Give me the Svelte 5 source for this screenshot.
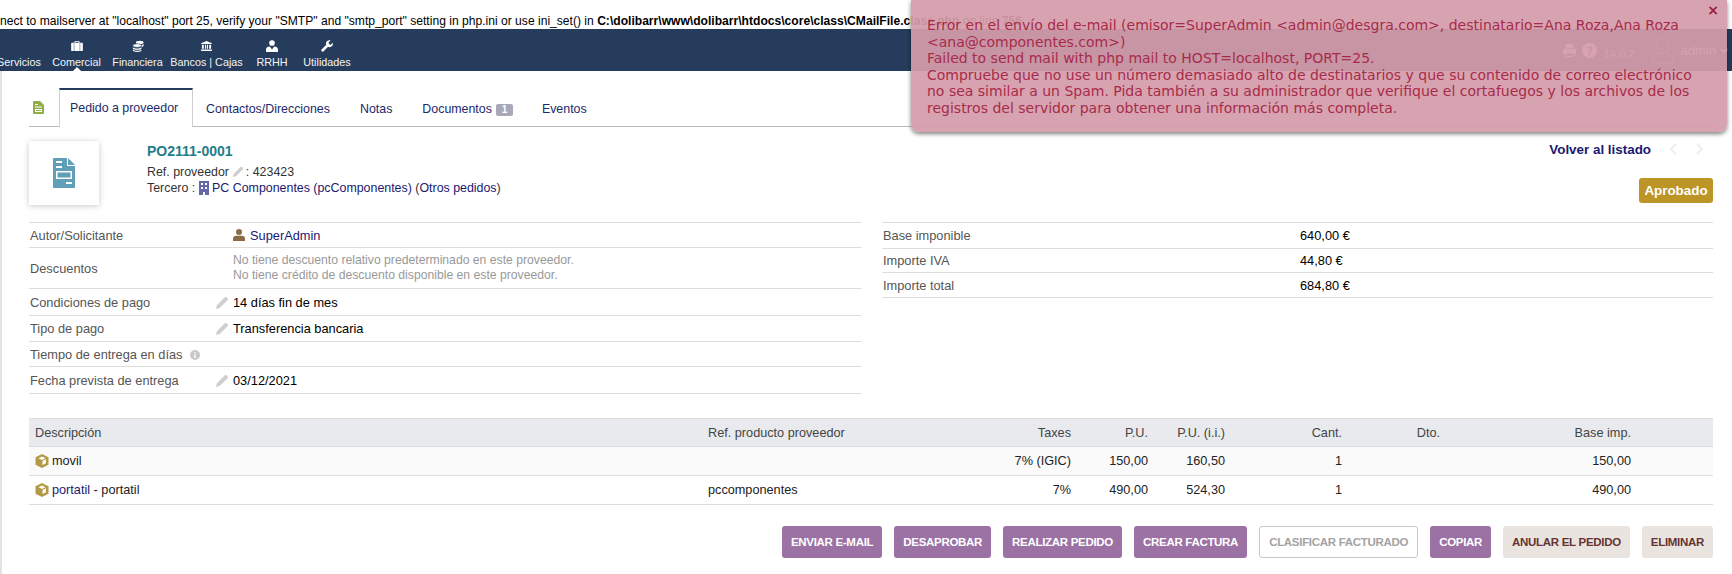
<script>
  const menu = [
    { label: 'Servicios', cls: 'm1', icon: 'none' },
    { label: 'Comercial', cls: 'm2', icon: 'case' },
    { label: 'Financiera', cls: 'm3', icon: 'coins' },
    { label: 'Bancos | Cajas', cls: 'm4', icon: 'bank' },
    { label: 'RRHH', cls: 'm5', icon: 'user' },
    { label: 'Utilidades', cls: 'm6', icon: 'wrench' }
  ];
  const buttons = [
    ['ENVIAR E-MAIL', 'p'], ['DESAPROBAR', 'p'], ['REALIZAR PEDIDO', 'p'], ['CREAR FACTURA', 'p'],
    ['CLASIFICAR FACTURADO', 'o'], ['COPIAR', 'p'], ['ANULAR EL PEDIDO', 'g'], ['ELIMINAR', 'g']
  ];
  const lines = [
    { name: 'movil', link: false, rest: '', ref: '', tax: '7% (IGIC)', pu: '150,00', pui: '160,50', qty: '1', base: '150,00' },
    { name: 'portatil', link: true, rest: ' - portatil', ref: 'pccomponentes', tax: '7%', pu: '490,00', pui: '524,30', qty: '1', base: '490,00' }
  ];
  const pencil = 'M1 15l1-4L10.500 2.500a1.400 1.400 0 0 1 2 0l1 1a1.400 1.400 0 0 1 0 2L5 14z';
</script>

{#snippet pen(cls)}
  <svg class={cls} viewBox="0 0 15 16" aria-hidden="true"><path d={pencil} /></svg>
{/snippet}

<div class="warn">nect to mailserver at "localhost" port 25, verify your "SMTP" and "smtp_port" setting in php.ini or use ini_set() in <b>C:\dolibarr\www\dolibarr\htdocs\core\class\CMailFile.class.php</b> on line <b>756</b></div>

<nav class="nav">
  {#each menu as m}
    <div class="mi {m.cls}">
      <span class="mic">
        {#if m.icon === 'case'}
          <svg viewBox="0 0 14 12" width="12" height="10"><path fill="#fff" d="M4 2V1a1 1 0 0 1 1-1h4a1 1 0 0 1 1 1v1h3a1 1 0 0 1 1 1v8a1 1 0 0 1-1 1H1a1 1 0 0 1-1-1V3a1 1 0 0 1 1-1zm1 0h4V1H5z"/><path fill="#8b93a5" d="M3 2h1v10H3zM10 2h1v10h-1z"/></svg>
        {:else if m.icon === 'coins'}
          <svg viewBox="0 0 14 14" width="12" height="12"><ellipse cx="9" cy="3" rx="4.500" ry="2" fill="#fff"/><path fill="#fff" d="M13.500 4.500v2c0 .8-1 1.500-2.500 1.800V6.200c1-.2 2-.8 2.500-1.700z"/><ellipse cx="6" cy="6.500" rx="5" ry="2.200" fill="#fff" stroke="#263c5c" stroke-width=".7"/><path fill="#fff" d="M1 8.500c1 1 3 1.500 5 1.500s4-.5 5-1.500v1.500C11 11 8.800 11.500 6 11.500S1 11 1 10zM1 11c1 1 3 1.500 5 1.500s4-.5 5-1.500v1c0 1-2.200 2-5 2s-5-1-5-2z"/></svg>
        {:else if m.icon === 'bank'}
          <svg viewBox="0 0 14 13" width="11" height="10"><path fill="#fff" d="M7 0l7 3v1H0V3zM1 5h2.500v5H1zM5 5h1.500v5H5zM7.500 5H9v5H7.500zM10.500 5H13v5h-2.500zM0 11h14v2H0z"/></svg>
        {:else if m.icon === 'user'}
          <svg viewBox="0 0 14 14" width="12" height="12"><circle cx="7" cy="3.500" r="3.300" fill="#fff"/><path fill="#fff" d="M0 14v-2.500C0 9 2 7.700 4.500 7.700L7 11l2.500-3.300C12 7.700 14 9 14 11.500V14z"/></svg>
        {:else if m.icon === 'wrench'}
          <svg viewBox="0 0 14 14" width="12" height="12"><path fill="#fff" d="M13.700 3.200l-2.300 2.300-2-.5-.5-2L11.200.7A4 4 0 0 0 6 5.800L.6 11.200a1.600 1.600 0 0 0 2.200 2.200L8.200 8a4 4 0 0 0 5.500-4.800z"/></svg>
        {/if}
      </span>
      <span class="ml">{m.label}</span>
      {#if m.icon === 'case'}<i class="caret"></i>{/if}
    </div>
  {/each}
  <div class="nav-right">
    <svg class="ni" viewBox="0 0 14 14" width="13" height="13"><path fill="#fff" d="M3 0h8v4H3zM1 5h12a1 1 0 0 1 1 1v5h-3v3H3v-3H0V6a1 1 0 0 1 1-1zm3 5v3h6v-3z"/></svg>
    <svg class="nh" viewBox="0 0 16 16" width="15" height="15"><path fill="#fff" fill-rule="evenodd" d="M8 0a8 8 0 1 1 0 16A8 8 0 0 1 8 0zM7 11v2h2v-2zM5.500 6h2c0-1 1.500-1 1.500 0S7 7.500 7 10h2c0-1.500 2.500-2 2.500-4.200C11.500 3 5.500 3 5.500 6z"/></svg>
    <span class="ver">14.0.2</span>
    <svg class="av" viewBox="0 0 24 28" width="23" height="27"><path fill="none" stroke="#fff" stroke-width="1" d="M12 2c4 0 6 3 6 7s-2 8-6 8-6-4-6-8 2-7 6-7zM8 16c-1 3-5 3-7 6v5h22v-5c-2-3-6-3-7-6"/></svg>
    <span class="adm">admin</span>
    <svg class="chev" viewBox="0 0 8 5" width="8" height="5"><path fill="none" stroke="#fff" stroke-width="1.500" d="M1 1l3 3 3-3"/></svg>
  </div>
</nav>

<main class="main">
  <div class="tabs">
    <svg class="tabico" viewBox="0 0 11 13" width="11" height="13"><path fill="#8fae4a" d="M1 0h6l4 4v8a1 1 0 0 1-1 1H1a1 1 0 0 1-1-1V1a1 1 0 0 1 1-1z"/><path fill="#fff" d="M2 3h3v1H2zM2 5.500h7v1H2zM2 8h7v3H2z"/><path fill="#8fae4a" d="M3 9h5v1H3z"/></svg>
    <a class="tab active">Pedido a proveedor</a>
    <a class="tab t2">Contactos/Direcciones</a>
    <a class="tab t3">Notas</a>
    <a class="tab t4">Documentos<span class="cnt">1</span></a>
    <a class="tab t5">Eventos</a>
  </div>

  <header class="head">
    <div class="logo">
      <svg viewBox="0 0 22 30" width="22" height="30"><path fill="#5f9fb8" d="M1 0h13v8h8v21a1 1 0 0 1-1 1H1a1 1 0 0 1-1-1V1a1 1 0 0 1 1-1z"/><path fill="#5f9fb8" d="M15 0l7 7h-7z"/><path fill="#fff" d="M3 3h6v2H3zM3 8h6v2H3zM13 24h6v2h-6z"/><path fill="none" stroke="#fff" stroke-width="1.500" d="M3.750 13.750h14.500v6.500H3.750z"/></svg>
    </div>
    <div class="ident">
      <div class="ref">PO2111-0001</div>
      <div class="sub">Ref. proveedor {@render pen('pen small')} : 423423</div>
      <div class="sub">Tercero : <svg class="bld" viewBox="0 0 10 14" width="10" height="14"><path fill="#6468a8" d="M0 0h10v14H6v-3H4v3H0z"/><path fill="#fff" d="M2 2h2v2H2zM6 2h2v2H6zM2 6h2v2H2zM6 6h2v2H6z"/></svg> <span class="lnk">PC Componentes (pcComponentes)</span> (<span class="lnk">Otros pedidos</span>)</div>
    </div>
    <div class="headr">
      <div class="back">
        <a class="backl">Volver al listado</a>
        <svg viewBox="0 0 8 12" width="8" height="12"><path fill="none" stroke="#eee" stroke-width="2" d="M7 1L2 6l5 5"/></svg>
        <svg viewBox="0 0 8 12" width="8" height="12"><path fill="none" stroke="#eee" stroke-width="2" d="M1 1l5 5-5 5"/></svg>
      </div>
      <span class="badge">Aprobado</span>
    </div>
  </header>

  <section class="cols">
    <div class="col left">
      <div class="row h25"><span class="lab">Autor/Solicitante</span><span class="val"><svg class="usr" viewBox="0 0 12 12" width="12" height="12"><circle cx="6" cy="3" r="3" fill="#8a6b48"/><path fill="#8a6b48" d="M0 12V9.500C0 8 1.500 6.800 3 6.800h6c1.500 0 3 1.200 3 2.700V12z"/></svg><span class="lnk">SuperAdmin</span></span></div>
      <div class="row h41"><span class="lab">Descuentos</span><span class="val muted">No tiene descuento relativo predeterminado en este proveedor.<br />No tiene crédito de descuento disponible en este proveedor.</span></div>
      <div class="row h27"><span class="lab">Condiciones de pago</span>{@render pen('pen')}<span class="val">14 días fin de mes</span></div>
      <div class="row h26"><span class="lab">Tipo de pago</span>{@render pen('pen')}<span class="val">Transferencia bancaria</span></div>
      <div class="row h25"><span class="lab">Tiempo de entrega en días <svg class="inf" viewBox="0 0 10 10" width="10" height="10"><circle cx="5" cy="5" r="5" fill="#c8c8c8"/><path fill="#fff" d="M4.300 2h1.400v1.300H4.300zM4.300 4.200h1.400V8H4.300z"/></svg></span></div>
      <div class="row h27"><span class="lab">Fecha prevista de entrega</span>{@render pen('pen')}<span class="val">03/12/2021</span></div>
    </div>
    <div class="col right">
      <div class="row h25b"><span class="lab">Base imponible</span><span class="amt">640,00 €</span></div>
      <div class="row h24"><span class="lab">Importe IVA</span><span class="amt">44,80 €</span></div>
      <div class="row h25"><span class="lab">Importe total</span><span class="amt">684,80 €</span></div>
    </div>
  </section>

  <table class="lines">
    <colgroup>
      <col class="c1" /><col class="c2" /><col class="c3" /><col class="c3" /><col class="c3" /><col class="c4" /><col class="c5" /><col class="c6" /><col class="c7" />
    </colgroup>
    <thead>
      <tr><th>Descripción</th><th>Ref. producto proveedor</th><th class="r">Taxes</th><th class="r">P.U.</th><th class="r">P.U. (i.i.)</th><th class="r">Cant.</th><th class="r">Dto.</th><th class="r">Base imp.</th><th></th></tr>
    </thead>
    <tbody>
      {#each lines as l}
        <tr>
          <td><svg class="cube" viewBox="0 0 14 14" width="14" height="14"><path fill="#b59a45" d="M7 0l6.500 3.300v7.400L7 14 .5 10.700V3.300z"/><path fill="#fff" d="M7 2.500l3.500 1.800L7 6 3.500 4.300z"/><path fill="#fff" d="M7.500 7l3.500-1.700-.1 3.900L7.500 11z"/></svg><span class:lnk={l.link}>{l.name}</span>{l.rest}</td>
          <td>{l.ref}</td><td class="r">{l.tax}</td><td class="r">{l.pu}</td><td class="r">{l.pui}</td><td class="r">{l.qty}</td><td></td><td class="r">{l.base}</td><td></td>
        </tr>
      {/each}
    </tbody>
  </table>

  <div class="actions">
    {#each buttons as b}
      <a class="btn {b[1]}">{b[0]}</a>
    {/each}
  </div>
</main>

<aside class="toast">
  <span class="x">×</span>
  Error en el envío del e-mail (emisor=SuperAdmin &lt;admin@desgra.com&gt;, destinatario=Ana Roza,Ana Roza<br />
  &lt;ana@componentes.com&gt;)<br />
  Failed to send mail with php mail to HOST=localhost, PORT=25.<br />
  Compruebe que no use un número demasiado alto de destinatarios y que su contenido de correo electrónico<br />
  no sea similar a un Spam. Pida también a su administrador que verifique el cortafuegos y los archivos de los<br />
  registros del servidor para obtener una información más completa.
</aside>

<style>
  :global(body) { margin: 0; background: #fff; overflow: hidden; font-family: "Liberation Sans", Arial, sans-serif; }
  .warn { height: 29px; line-height: 42px; font-size: 12.1px; color: #000; white-space: nowrap; overflow: hidden; }
  .nav { height: 42px; background: #263c5c; display: flex; position: relative; color: #fff; }
  .mi { display: flex; flex-direction: column; align-items: center; position: relative; font-size: 10.8px; }
  .mic { height: 21px; margin-top: 6px; display: flex; align-items: center; justify-content: center; }
  .ml { white-space: nowrap; line-height: 13px; color: #f2f4f7; }
  .m1 { width: 40px; margin-left: -1px; }
  .m2 { width: 75px; }
  .m3 { width: 47px; }
  .m4 { width: 91px; }
  .m5 { width: 40px; }
  .m6 { width: 70px; }
  .caret { position: absolute; left: 50%; bottom: 0; margin-left: -4px; border: 4px solid transparent; border-top: 0; border-bottom-color: #fff; }
  .nav-right { margin-left: auto; display: flex; align-items: center; padding-right: 4px; color: #fff; }
  .nh { margin-left: 6px; }
  .ver { font-size: 11px; margin: 8px 16px 0 7px; opacity: .7; }
  .av { opacity: .5; }
  .adm { font-size: 13px; margin-left: 7px; opacity: .8; }
  .chev { margin-left: 4px; }
  .main { border-left: 2px solid #e3e3e3; box-sizing: border-box; padding: 17px 19px 0 27px; height: 503px; }
  .tabs { display: flex; align-items: center; height: 38px; border-bottom: 1px solid #bbb; font-size: 12.4px; color: #1a2a6c; position: relative; }
  .tabico { margin: 0 15px 0 4px; }
  .tab { line-height: 38px; height: 38px; box-sizing: border-box; padding: 2px 0 0; white-space: nowrap; }
  .active { width: 134px; border: 1px solid #cfcfcf; border-top: 2px solid #263c5c; border-bottom: 0; padding: 0 0 0 10px; line-height: 37px; background: #fff; margin-bottom: -1px; height: 39px; }
  .t2 { margin-left: 13px; }
  .t3 { margin-left: 30px; }
  .t4 { margin-left: 30px; }
  .t5 { margin-left: 29px; }
  .cnt { display: inline-block; background: #a8a8b8; color: #fff; font-size: 10px; font-weight: bold; line-height: 12px; width: 17px; text-align: center; border-radius: 2px; margin-left: 4px; }
  .head { display: flex; margin-top: 14px; height: 65px; }
  .logo { width: 70px; height: 64px; box-shadow: 0 1px 6px rgba(0,0,0,.22); display: flex; align-items: center; justify-content: center; }
  .ident { margin-left: 48px; font-size: 12.4px; color: #333; padding-top: 2px; }
  .ref { font-weight: bold; font-size: 14px; color: #1f7d8a; line-height: 16px; margin-bottom: 5px; }
  .sub { line-height: 16px; height: 16px; white-space: nowrap; }
  .lnk { color: #1a1a70; }
  .pen { width: 14px; height: 15px; fill: #cfcfcf; flex: none; }
  .pen.small { width: 12px; height: 13px; vertical-align: -2px; margin-right: -2px; }
  .bld { vertical-align: -3px; }
  .headr { margin-left: auto; display: flex; flex-direction: column; align-items: flex-end; }
  .back { display: flex; align-items: center; height: 16px; gap: 19px; padding-right: 9px; }
  .backl { font-weight: bold; font-size: 13.4px; color: #1a1a70; margin-right: -1px; }
  .badge { margin-top: 21px; background: #bc9526; color: #fff; font-weight: bold; font-size: 13.4px; line-height: 25px; width: 74px; text-align: center; border-radius: 3px; }
  .cols { display: flex; justify-content: space-between; margin-top: 16px; font-size: 12.8px; }
  .col { border-top: 1px solid #ddd; }
  .left { width: 832px; height: 171px; }
  .right { width: 831px; height: 75px; }
  .row { display: flex; align-items: center; border-bottom: 1px solid #ddd; box-sizing: border-box; padding-left: 1px; }
  .h41 { height: 41px; } .h27 { height: 27px; } .h26 { height: 26px; } .h25 { height: 25px; } .h24 { height: 24px; } .h25b { height: 26px; }
  .lab { color: #555; white-space: nowrap; }
  .left .lab { width: 185px; flex: none; }
  .left .lab + .val { margin-left: 18px; }
  .left .pen { margin: 0 4px 0 0; }
  .val { color: #000; display: flex; align-items: center; }
  .muted { color: #999; display: block; line-height: 15px; font-size: 12.2px; }
  .usr { margin-right: 5px; }
  .inf { vertical-align: -1px; margin-left: 4px; }
  .right .lab { width: 417px; }
  .amt { color: #000; }
  .lines { width: 1684px; table-layout: fixed; border-collapse: collapse; margin-top: 24px; font-size: 12.7px; }
  .c1 { width: 673px; } .c2 { width: 298px; } .c3 { width: 77px; } .c4 { width: 117px; } .c5 { width: 98px; } .c6 { width: 191px; } .c7 { width: 76px; }
  th { background: #e9eaed; border-top: 1px solid #ddd; border-bottom: 1px solid #ddd; height: 28px; font-weight: normal; color: #444; text-align: left; padding: 0 6px; box-sizing: border-box; }
  td { height: 29px; border-bottom: 1px solid #ddd; padding: 0 6px; color: #222; box-sizing: border-box; }
  tbody tr:first-child td { background: #fafafa; }
  .r { text-align: right; }
  .cube { vertical-align: -3px; margin-right: 3px; }
  .actions { display: flex; justify-content: flex-end; gap: 12px; margin-top: 21px; }
  .btn { height: 32px; line-height: 32px; box-sizing: border-box; padding: 0 9px; border-radius: 3px; font-size: 11.5px; letter-spacing: -.3px; font-weight: bold; white-space: nowrap; }
  .p { background: #9c72a5; color: #fff; }
  .o { background: #fff; color: #a3a3a3; border: 1px solid #c8c8c8; line-height: 30px; }
  .g { background: #e9e4e0; color: #633; }
  .toast { position: absolute; left: 911px; top: 0; width: 816px; height: 132px; box-sizing: border-box; padding: 17px 0 0 16px; background: rgba(213,156,170,.93); border-radius: 0 0 8px 8px; box-shadow: 0 2px 4px rgba(0,0,0,.5); color: #a72b4b; font-family: "DejaVu Sans", Verdana, sans-serif; font-size: 14px; line-height: 16.6px; white-space: nowrap; }
  .x { position: absolute; right: 8px; top: 2px; font-weight: bold; font-size: 14px; color: #9c2140; }
</style>
